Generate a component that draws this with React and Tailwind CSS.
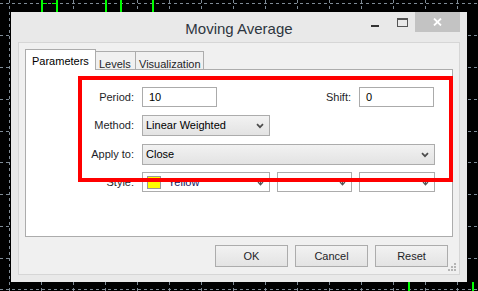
import React from "react";

const hLines = [3, 35, 67, 99, 131, 162, 194, 226, 258, 289];
const vLines = Array.from({ length: 15 }, (_, i) => 9 + i * 32);

const ChartGrid = () => (
  <svg className="absolute inset-0" width="478" height="291" viewBox="0 0 478 291">
    {hLines.map((y) => (
      <line key={"h" + y} x1="0" x2="478" y1={y + 0.5} y2={y + 0.5} stroke="#7f8b96" strokeDasharray="3 3" />
    ))}
    {vLines.map((x) => (
      <line key={"v" + x} x1={x + 0.5} x2={x + 0.5} y1="0" y2="291" stroke="#7f8b96" strokeDasharray="3 3" />
    ))}
    {/* candles peeking out above and below the dialog */}
    <g fill="#00ff00">
      <rect x="41" y="0" width="2" height="12" />
      <rect x="43" y="3" width="4" height="1" />
      <rect x="52" y="3" width="4" height="1" />
      <rect x="56" y="0" width="2" height="12" />
      <rect x="105" y="0" width="2" height="12" />
      <rect x="120" y="0" width="2" height="12" />
      <rect x="152" y="0" width="2" height="12" />
      <rect x="408" y="282" width="2" height="9" />
      <rect x="472" y="282" width="2" height="9" />
    </g>
  </svg>
);

const Chevron = () => (
  <svg width="8" height="6" viewBox="0 0 8 6">
    <path d="M1 1.2 L4 4.2 L7 1.2" fill="none" stroke="#4d4d4d" strokeWidth="1.7" />
  </svg>
);

const SmallArrow = () => (
  <svg width="7" height="7" viewBox="0 0 7 7">
    <path d="M3.5 0 V5.5 M1 3 L3.5 5.8 L6 3" fill="none" stroke="#555" strokeWidth="1.2" />
  </svg>
);

const TextBox = ({ value }) => (
  <div className="w-[75px] h-[20px] border border-[#ababab] bg-white flex items-center pl-[6px] text-black">
    {value}
  </div>
);

const ComboBox = ({ value, width }) => (
  <div
    className={`${width} h-[21px] border border-[#acacac] bg-gradient-to-b from-[#f2f2f2] to-[#e3e3e3] flex items-center justify-between pl-[3px] pr-[5px] text-black`}
  >
    <span>{value}</span>
    <Chevron />
  </div>
);

const StyleBox = ({ width, children }) => (
  <div className={`${width} h-[20px] border border-[#acacac] bg-white flex items-center justify-between pl-[3px] pr-[5px]`}>
    <div className="flex items-center">{children}</div>
    <SmallArrow />
  </div>
);

const Label = ({ children }) => (
  <div className="w-[108px] text-right text-[#1e1e28]">{children}</div>
);

const Button = ({ children }) => (
  <div className="w-[73px] h-[22px] border border-[#acacac] bg-gradient-to-b from-[#f2f2f2] to-[#e3e3e3] flex items-center justify-center text-[#1e1e28]">
    {children}
  </div>
);

export default function App() {
  return (
    <div className="relative w-[478px] h-[291px] bg-black overflow-hidden font-['Liberation_Sans',Arial,sans-serif] text-[11px]">
      <ChartGrid />

      {/* dialog window */}
      <div className="absolute left-[11px] top-[12px] w-[456px] h-[270px] bg-[#e9e9e9] flex flex-col">
        <div className="h-[30px] grid grid-cols-[1fr_auto_1fr]">
          <div />
          <div className="text-[15px] text-[#2e3640] pt-[6px]">Moving Average</div>
          <div className="flex justify-end items-start pr-[7px]">
            <div className="mt-[13px] w-[8px] h-[2px] bg-[#333] mr-[18px]" />
            <div className="mt-[6px] w-[11px] h-[9px] border border-[#555] border-t-2 mr-[7px]" />
            <div className="w-[45px] h-[20px] bg-[#c3c3c3] flex items-center justify-center">
              <svg width="9" height="8" viewBox="0 0 9 8">
                <path d="M1 0.5 L8 7.5 M8 0.5 L1 7.5" stroke="#fff" strokeWidth="1.8" />
              </svg>
            </div>
          </div>
        </div>

        <div className="mx-[7px] h-[233px] border border-[#d6d6d6] bg-[#f0f0f0] pt-[6px] px-[6px] flex flex-col">
          {/* tabs */}
          <div className="flex items-end h-[20px] relative z-10">
            <div className="w-[71px] h-[21px] -mb-px bg-white border border-b-0 border-[#acacac] pl-[6px] pt-[3px] text-black">
              Parameters
            </div>
            <div className="w-[40px] h-[18px] border-t border-r border-[#acacac] bg-[#f0f0f0] pl-[3px] pt-[4px] text-[#1e1e28]">
              Levels
            </div>
            <div className="w-[68px] h-[18px] border-t border-r border-[#acacac] bg-[#f0f0f0] pl-[3px] pt-[4px] text-[#1e1e28]">
              Visualization
            </div>
          </div>

          {/* tab page */}
          <div className="h-[168px] border border-[#acacac] bg-white pt-[17px] flex flex-col gap-[8px]">
            <div className="flex items-center">
              <Label>Period:</Label>
              <div className="ml-[8px]">
                <TextBox value="10" />
              </div>
              <div className="w-[134px] text-right text-[#1e1e28]">Shift:</div>
              <div className="ml-[8px]">
                <TextBox value="0" />
              </div>
            </div>
            <div className="flex items-center">
              <Label>Method:</Label>
              <div className="ml-[8px]">
                <ComboBox value="Linear Weighted" width="w-[128px]" />
              </div>
            </div>
            <div className="flex items-center">
              <Label>Apply to:</Label>
              <div className="ml-[8px]">
                <ComboBox value="Close" width="w-[293px]" />
              </div>
            </div>
            <div className="flex items-center -mt-px">
              <Label>Style:</Label>
              <div className="ml-[8px] flex gap-[7px]">
                <StyleBox width="w-[128px]">
                  <div className="ml-[1px] w-[14px] h-[13px] border border-[#999] bg-[#ffff00]" />
                  <span className="ml-[7px] text-[#14145a]">Yellow</span>
                </StyleBox>
                <StyleBox width="w-[75px]" />
                <StyleBox width="w-[76px]" />
              </div>
            </div>
          </div>

          {/* buttons */}
          <div className="mt-[8px] flex justify-end gap-[7px] pr-[5px]">
            <Button>OK</Button>
            <Button>Cancel</Button>
            <Button>Reset</Button>
          </div>
        </div>

        {/* size grip */}
        <svg className="absolute left-[437px] top-[251px]" width="9" height="9" viewBox="0 0 9 9" fill="#b5b5b5">
          <rect x="6" y="0" width="2" height="2" />
          <rect x="3" y="3" width="2" height="2" />
          <rect x="6" y="3" width="2" height="2" />
          <rect x="0" y="6" width="2" height="2" />
          <rect x="3" y="6" width="2" height="2" />
          <rect x="6" y="6" width="2" height="2" />
        </svg>
      </div>

      {/* red highlight box drawn over the dialog */}
      <div className="absolute left-[78px] top-[76px] w-[375px] h-[106px] border-4 border-[#ff0000]" />
    </div>
  );
}
